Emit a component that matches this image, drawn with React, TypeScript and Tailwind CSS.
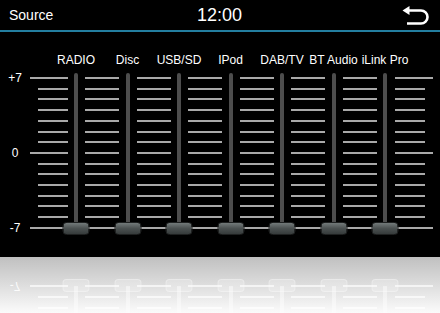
import React from "react";

const SOURCES = ["RADIO", "Disc", "USB/SD", "IPod", "DAB/TV", "BT Audio", "iLink Pro"];
const ROWS = Array.from({ length: 15 }, (_, i) => i);
const SCALE: Record<number, string> = { 0: "+7", 7: "0", 14: "-7" };

const BackIcon = () => (
  <svg width="28" height="22" viewBox="0 0 28 22" fill="none">
    <path d="M0.5 5.5 L7.5 1 L7.5 10 Z" fill="white" />
    <path
      d="M6 5.5 H19 A6.5 6.5 0 0 1 19 18.5 H5"
      stroke="white"
      strokeWidth="2.6"
      strokeLinecap="butt"
    />
  </svg>
);

type Side = "first" | "mid" | "last";

const Segment = ({ side, reflect }: { side: Side; reflect?: boolean }) => {
  const width = side === "first" ? "w-[44px] pl-0 pr-[6px]" : side === "last" ? "w-[46px] pl-[8px]" : "w-[47.5px] pl-[7px] pr-[6.5px]";
  const color = reflect ? "bg-white/75" : "bg-[#a9a9a9]";
  return (
    <div className={`${width} mt-[4px] flex h-[152px] flex-col justify-between`}>
      {ROWS.map((r) => {
        const major = r === 0 || r === 7 || r === 14;
        let margin = "";
        if (!major && side === "first") margin = "ml-[8px]";
        if (!major && side === "last") margin = "mr-[8px]";
        return <div key={r} className={`h-[2px] ${color} ${margin}`} />;
      })}
    </div>
  );
};

const Track = ({ reflect }: { reflect?: boolean }) => (
  <div className="relative w-[4px]">
    <div className={`h-[155px] w-[4px] rounded-t-full ${reflect ? "bg-white/50" : "bg-[#4d4d4d]"}`} />
    <div
      className={`absolute left-1/2 top-[149px] h-[13px] w-[27px] -translate-x-1/2 rounded-[4px] border ${
        reflect
          ? "border-white/35 bg-white/25"
          : "border-[#1e2020] bg-gradient-to-b from-[#737a7a] via-[#4b5151] to-[#363b3b]"
      }`}
    />
  </div>
);

const TickArea = ({ reflect }: { reflect?: boolean }) => (
  <div className="flex h-[184px]">
    <div className="mt-[4px] flex h-[152px] w-[30px] flex-col justify-between">
      {ROWS.map((r) => (
        <div key={r} className="flex h-[2px] items-center justify-center">
          {SCALE[r] !== undefined && (
            <span className="text-[12px] leading-none text-white">{SCALE[r]}</span>
          )}
        </div>
      ))}
    </div>
    <Segment side="first" reflect={reflect} />
    {SOURCES.map((s, i) => (
      <React.Fragment key={s}>
        <Track reflect={reflect} />
        <Segment side={i === SOURCES.length - 1 ? "last" : "mid"} reflect={reflect} />
      </React.Fragment>
    ))}
  </div>
);

const LabelRow = () => (
  <div className="flex h-[41px] items-center pt-[14px]">
    <div className="w-[74px] shrink-0" />
    {SOURCES.map((s, i) => (
      <React.Fragment key={s}>
        <div className="flex w-[4px] shrink-0 justify-center">
          <span className="shrink-0 whitespace-nowrap text-[12px] leading-none text-white">{s}</span>
        </div>
        {i < SOURCES.length - 1 && <div className="w-[47.5px] shrink-0" />}
      </React.Fragment>
    ))}
  </div>
);

export default function App() {
  return (
    <div
      className="h-[313px] w-[440px] overflow-hidden bg-black"
      style={{ fontFamily: '"Liberation Sans", Arial, sans-serif' }}
    >
      <div className="flex h-[32px] items-center border-b-2 border-[#237ea0] px-[9px]">
        <div className="flex-1 text-[14px] leading-none text-white">Source</div>
        <div className="text-[18px] leading-none text-white">12:00</div>
        <div className="flex flex-1 justify-end pr-[1px] pt-[2px]">
          <BackIcon />
        </div>
      </div>
      <LabelRow />
      <TickArea />
      <div className="h-[56px] overflow-hidden bg-gradient-to-b from-[#c0c0c0] to-[#fbfbfb]">
        <div className="-scale-y-100 opacity-90">
          <TickArea reflect />
        </div>
      </div>
    </div>
  );
}
